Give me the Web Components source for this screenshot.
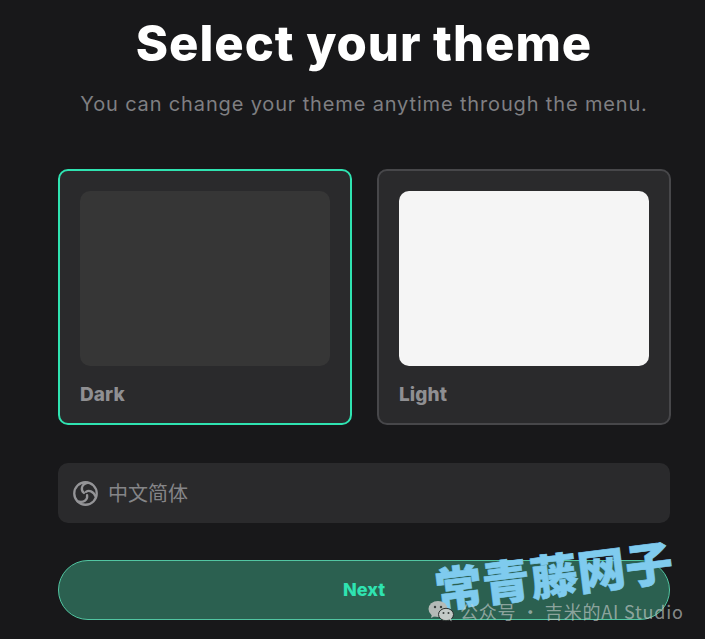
<!DOCTYPE html>
<html lang="zh">
<head>
<meta charset="utf-8">
<title>Select your theme</title>
<style>
  html, body { margin: 0; height: 639px; overflow: hidden; background: #18181a; }
  body { font-family: Inter, "Noto Sans", sans-serif; }
</style>
</head>
<body>
<theme-page>
  <theme-option slot="options" label="Dark" preview="#363636" selected></theme-option>
  <theme-option slot="options" label="Light" preview="#f5f5f5"></theme-option>
</theme-page>
<water-mark></water-mark>

<script>
// page frame: heading, theme cards, language bar, next button
class ThemePage extends HTMLElement {
  constructor() {
    super();
    this.shadow = this.attachShadow({ mode: 'open' });
    this.shadow.innerHTML = `
      <style>
        :host {
          display: flex;
          flex-direction: column;
          width: 612px;
          margin-left: 58px;
        }
        h1 {
          margin: 14px 0 0;
          font: 800 49px/60px Inter, sans-serif;
          letter-spacing: 0.95px;
          color: #fff;
          text-align: center;
          white-space: nowrap;
        }
        p {
          margin: 17px 0 0;
          font: 400 20px/26px Inter, sans-serif;
          letter-spacing: 0.85px;
          color: #7f7f82;
          text-align: center;
          white-space: nowrap;
        }
        .options {
          display: flex;
          gap: 25px;
          margin-top: 52px;
          width: 613px;
        }
      </style>
      <h1>Select your theme</h1>
      <p>You can change your theme anytime through the menu.</p>
      <div class="options"><slot name="options"></slot></div>
      <language-bar>中文简体</language-bar>
      <next-button>Next</next-button>
    `;
  }
}

class ThemeOption extends HTMLElement {
  constructor() {
    super();
    this.shadow = this.attachShadow({ mode: 'open' });
    this.shadow.innerHTML = `
      <style>
        :host {
          display: block;
          box-sizing: border-box;
          width: 294px;
          height: 256px;
          padding: 20px 20px 0 20px;
          background: #2a2a2c;
          border: 2px solid #47474a;
          border-radius: 10px;
          cursor: pointer;
        }
        :host([selected]) { border-color: #2fe3b1; }
        .preview { height: 175px; width: 250px; border-radius: 10px; }
        .label {
          margin-top: 18px;
          font: 800 19px/22px Inter, sans-serif;
          letter-spacing: 0.1px;
          color: #8f8f92;
        }
      </style>
      <div class="preview"></div>
      <div class="label"></div>
    `;
  }

  connectedCallback() {
    this.shadow.querySelector('.preview').style.background = this.getAttribute('preview');
    this.shadow.querySelector('.label').textContent = this.getAttribute('label');
  }
}

class LanguageBar extends HTMLElement {
  constructor() {
    super();
    this.shadow = this.attachShadow({ mode: 'open' });
    this.shadow.innerHTML = `
      <style>
        :host {
          display: flex;
          align-items: center;
          gap: 10px;
          box-sizing: border-box;
          height: 60px;
          margin-top: 38px;
          padding-left: 15px;
          background: #2a2a2c;
          border-radius: 10px;
          font: 400 20px/24px "Noto Sans CJK SC", sans-serif;
          color: #858588;
        }
        svg { width: 25px; height: 25px; flex: none; }
      </style>
      <svg viewBox="0 0 24 24" fill="none" stroke="#949497" stroke-width="2.2" stroke-linecap="round">
        <circle cx="12" cy="12" r="10.8"/>
        <path d="M14 1.8C8 3 7 8.5 10.5 11.5"/>
        <path d="M22 15.5C19.5 9.5 15 8.5 12.5 10.5"/>
        <path d="M4.5 19.5C10 21 14.5 18.5 13.5 13.5"/>
      </svg>
      <slot></slot>
    `;
  }
}

class NextButton extends HTMLElement {
  constructor() {
    super();
    this.shadow = this.attachShadow({ mode: 'open' });
    this.shadow.innerHTML = `
      <style>
        :host {
          display: flex;
          align-items: center;
          justify-content: center;
          box-sizing: border-box;
          height: 60px;
          margin-top: 37px;
          background: #2b6050;
          border: 1px solid #52c6a2;
          border-radius: 30px;
          font: 800 18px/22px Inter, sans-serif;
          letter-spacing: 0;
          color: #2fe3b1;
          cursor: pointer;
        }
      </style>
      <slot></slot>
    `;
  }
}

// image watermark that sits over the button
class WaterMark extends HTMLElement {
  constructor() {
    super();
    this.shadow = this.attachShadow({ mode: 'open' });
    this.shadow.innerHTML = `
      <style>
        :host { position: absolute; left: 0; top: 0; width: 705px; height: 639px; pointer-events: none; overflow: hidden; }
        .brand {
          position: absolute;
          left: 438px;
          top: 560px;
          font: 900 47px/56px "Noto Sans CJK SC", sans-serif;
          color: #7fcbee;
          white-space: nowrap;
          transform-origin: left bottom;
          transform: rotate(-7deg) scaleX(1.02);
          -webkit-text-stroke: 0.6px #7fcbee;
        }
        .account {
          position: absolute;
          left: 428px;
          top: 598px;
          display: flex;
          align-items: center;
          gap: 6px;
          font: 400 18px/26px "Noto Sans CJK SC", sans-serif;
          letter-spacing: 0.8px;
          color: rgba(205, 210, 208, 0.62);
          white-space: nowrap;
        }
        svg { width: 26px; height: 22px; flex: none; }
      </style>
      <div class="brand">常青藤网子</div>
      <div class="account">
        <svg viewBox="0 0 26 22">
          <ellipse cx="10" cy="9" rx="9.5" ry="8" fill="#b4bab7"/>
          <path d="M4 14l-1 4 5-2.5z" fill="#b4bab7"/>
          <ellipse cx="18" cy="14.5" rx="7.5" ry="6.2" fill="#c4cac7" stroke="#2a2f2d" stroke-width="1"/>
          <path d="M21 19l2.5 2.5-.5-4z" fill="#c4cac7"/>
          <circle cx="7" cy="7" r="1.2" fill="#3a3f3d"/>
          <circle cx="13" cy="7" r="1.2" fill="#3a3f3d"/>
          <circle cx="15.5" cy="13" r="1" fill="#3a3f3d"/>
          <circle cx="20.5" cy="13" r="1" fill="#3a3f3d"/>
        </svg>
        <span>公众号 · 吉米的AI Studio</span>
      </div>
    `;
  }
}

customElements.define('theme-option', ThemeOption);
customElements.define('language-bar', LanguageBar);
customElements.define('next-button', NextButton);
customElements.define('water-mark', WaterMark);
customElements.define('theme-page', ThemePage);
</script>
</body>
</html>
